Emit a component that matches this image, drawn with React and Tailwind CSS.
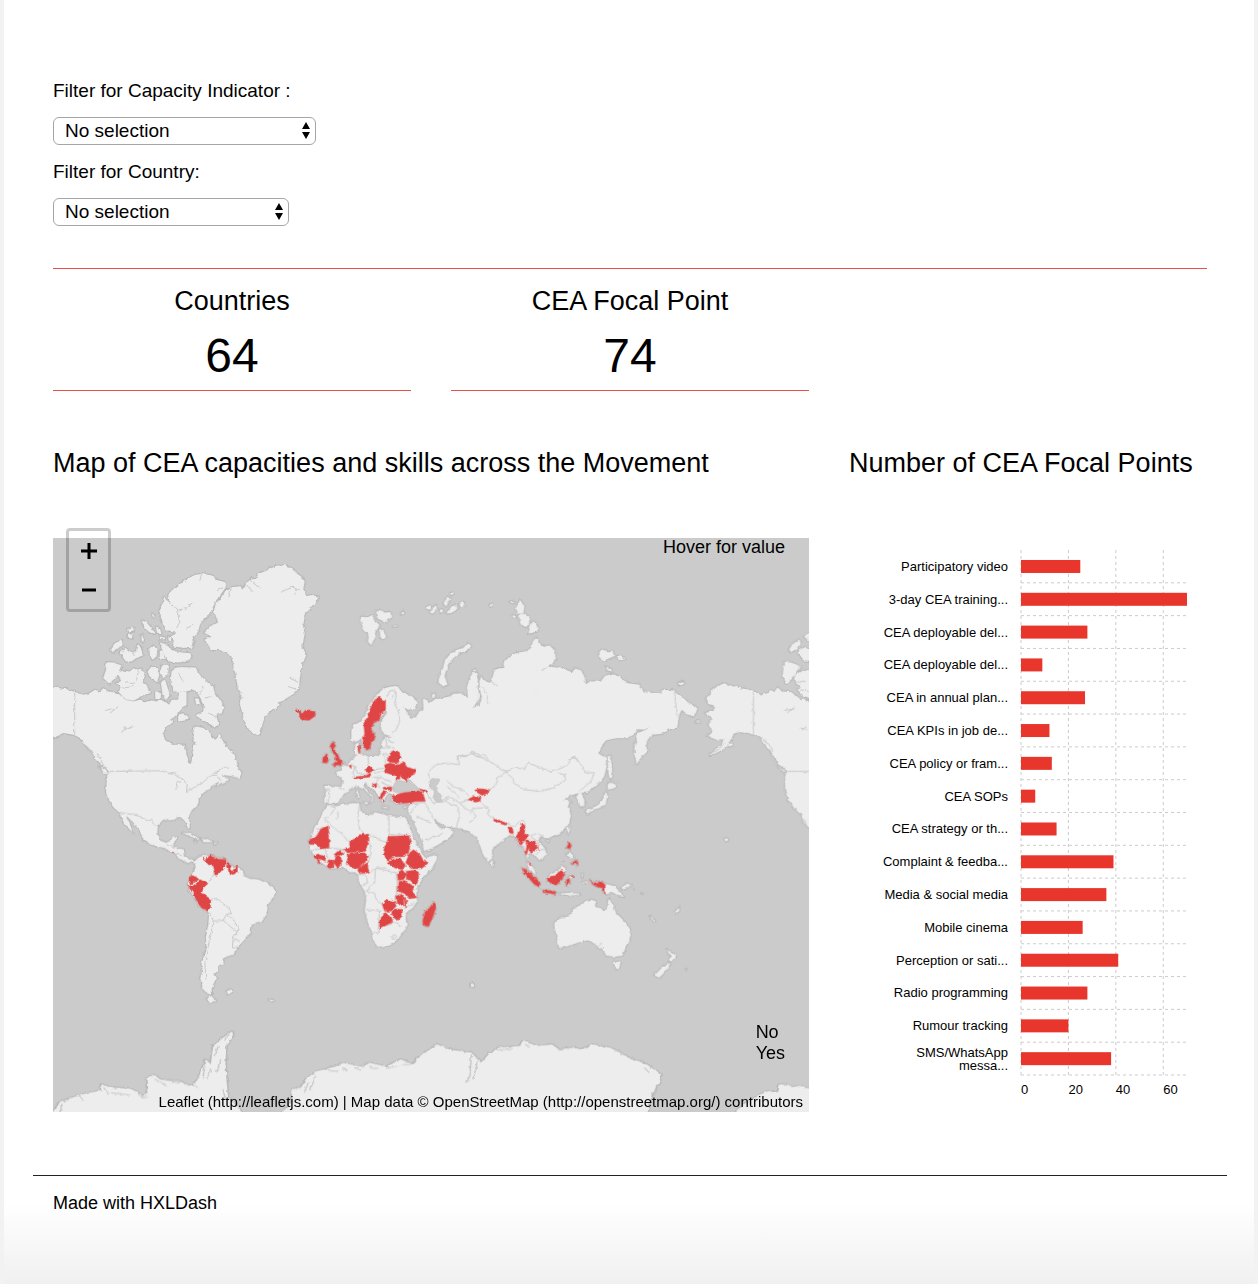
import React from "react";

const SHEETS = [
  {
    at: "translate(50 500) scale(0.33333)",
    land: [
      "M355,285 L375,265 405,240 435,225 460,220 490,228 500,240 522,245 528,262 515,280 500,300 485,330 478,345 465,355 450,375 445,395 430,415 432,430 425,445 395,443 368,440 375,425 365,410 380,395 350,392 340,370 330,350 328,330 338,315 342,293 350,300 362,310Z",
      "M330,428 L355,435 365,450 395,458 422,460 425,470 415,485 385,488 355,485 345,470 338,455Z",
      "M275,362 L290,368 305,385 315,402 300,398 285,385Z M318,380 L330,385 335,402 322,402Z M232,390 L250,383 252,395 235,398Z M232,405 L248,403 246,416 234,414Z",
      "M306,340 L314,345 315,355 308,350Z M275,405 L283,415 280,428 275,420Z M328,410 L345,412 345,418 330,418Z M355,408l10,5 -3,12 -6,-5z",
      "M180,450 L195,430 215,420 218,435 205,445 190,458Z M208,458 L225,443 240,455 258,458 262,435 275,445 278,468 258,475 245,485 228,485Z",
      "M298,445 L312,437 322,450 320,470 308,480 300,465Z M330,452 L340,458 345,478 330,475Z",
      "M170,487 L190,488 215,497 208,515 195,535 178,552 160,535 168,510Z",
      "M200,520 L220,512 240,515 250,505 265,510 275,505 285,530 275,545 290,555 300,580 275,590 250,603 225,598 205,575 215,565 200,548 215,545Z",
      "M293,515 L305,500 322,505 328,525 322,548 310,540 298,528Z M335,495 L358,495 355,515 342,535 332,520Z M333,545 L345,540 352,560 360,585 350,600 338,585Z M315,578l18,0 0,18 -16,4z",
      "M365,515 L380,503 410,502 435,503 450,525 470,545 490,560 495,580 510,600 525,622 515,640 500,645 505,670 500,685 475,672 455,660 440,645 460,635 462,620 455,600 440,575 430,570 405,575 375,575 362,550Z",
      "M385,645 L400,640 418,655 405,662 385,665Z M435,595l12,2 4,15 -12,3z",
      "M-10,562 L30,565 50,568 80,578 100,585 120,580 135,570 150,575 160,565 175,575 195,578 215,590 225,600 250,605 270,600 285,607 305,602 320,605 335,600 345,605 358,615 365,600 385,600 388,575 410,575 410,615 395,628 375,650 360,660 370,665 350,680 340,700 345,720 365,735 385,740 405,755 412,775 416,790 150,790 135,775 125,755 105,735 90,715 70,705 40,700 10,715 -10,720Z",
      "M424,795 L430,765 440,745 432,720 430,700 435,680 455,683 475,690 485,710 497,720 510,705 520,725 535,745 555,770 565,795Z",
      "M462,398 L480,380 505,368 495,340 490,335 500,310 515,290 530,270 545,262 575,258 580,270 590,250 605,235 620,235 625,222 650,212 680,197 705,195 725,205 740,220 762,235 765,250 760,265 770,290 780,285 808,290 795,310 775,330 765,350 760,380 765,400 758,440 770,465 755,500 750,540 748,565 735,580 710,595 690,607 680,625 660,635 645,650 638,675 632,700 625,707 605,697 590,680 580,650 570,610 575,590 565,570 560,540 555,515 550,490 545,470 530,455 510,450 485,450 475,435 465,420 485,410Z",
    ],
    red: ["M738,630 L748,630 757,642 766,632 785,630 798,640 795,650 778,662 760,660 748,650 752,644Z"],
    lines: [
      "M74,578V705 M362,312 L385,330 415,322 430,305 M380,330 L390,365 380,385 M400,238l12,12 M455,222l-5,20 M522,262l-20,10 M410,385l20,-10 M168,632l20,-5 M180,640l25,-20 M215,695l35,-18 M220,685l20,0",
      "M695,275 L730,262 750,270 M740,262l-5,25 M600,240l30,25 M590,255l20,20 M545,262l-8,30 M715,560l30,10 M720,535l25,12 M565,600l18,-5 M565,575l15,8",
      "M225,545l30,5 M215,565l35,-5 M265,512l-5,30 M385,520l15,25 M460,560l-10,25 M485,590l-20,5 M475,640l25,10 M205,440l20,20 M245,450l8,18",
    ],
  },
  {
    at: "translate(300 500) scale(0.33333)",
    land: [
      "M185,350 L205,352 218,345 225,365 240,378 228,395 222,420 215,437 205,425 208,405 195,395 185,370Z M230,335 L240,330 255,338 272,336 275,350 262,367 248,362 232,355Z M240,385 L250,395 260,408 252,420 242,412Z",
      "M303,340l8,-5 4,5 -6,4Z M280,377h13v3h-13Z M378,323 L392,315 396,325 386,330Z M390,335 L410,315 412,325 398,342Z M432,310 L445,290 452,298 440,320Z M440,340 L455,320 470,312 474,328 455,340Z M480,312 L492,305 495,315 484,320Z M452,280l8,-4 2,6 -7,4Z M420,330l8,-3 3,8 -8,4z",
      "M570,315l6,-3 4,5 -7,4z M632,305l10,-3 3,6 -8,2Z M650,325 L662,300 675,320 672,340 655,342Z M655,350 L670,340 688,350 690,370 680,382 665,372Z M640,345l10,5 -3,5 -8,-5z M690,375 L703,364 718,385 712,395 695,400 688,403Z",
      "M508,430 L515,440 500,452 480,460 462,475 448,490 440,510 435,530 445,555 430,560 417,545 422,525 430,505 437,480 450,465 470,450 490,445Z M397,585l8,-4 3,8 -9,3z M518,512l10,-3 2,6z",
      "M155,690 L160,675 185,665 195,650 205,625 220,600 235,580 255,565 275,560 295,560 305,575 325,585 345,595 355,610 345,628 325,630 310,620 325,640 335,658 350,650 360,635 372,625 370,600 382,600 390,610 405,600 425,595 450,590 470,578 490,585 505,592 503,560 510,535 522,515 535,525 535,560 540,590 530,610 520,625 540,615 548,595 540,565 540,545 545,530 560,545 575,550 580,530 585,510 600,505 615,505 612,490 630,470 650,460 675,455 695,445 700,425 712,413 725,435 745,440 765,455 768,475 760,490 745,500 760,505 800,512 800,785 240,785 245,770 240,750 250,742 245,730 258,712 282,710 262,706 248,700 243,680 250,655 262,640 258,630 240,660 222,670 215,690 225,705 225,718 215,725 210,748 200,752 190,735 185,715 170,728 155,720Z",
    ],
    red: [
      "M258,600 L258,630 245,640 240,660 222,670 215,690 225,705 225,718 215,725 212,745 203,752 193,745 190,720 195,700 192,670 205,655 210,630 225,600 240,592 250,600Z",
      "M175,742l5,-8 1,22 -5,3z",
    ],
    lines: [
      "M240,592 L225,590 M262,592 L270,575 285,570 290,590 285,610 298,640 300,665 290,690 278,702 M470,780 L475,768 500,768 515,758 530,770 555,775 565,785 M258,712 L262,740 285,745 M268,712v15h15 M545,560l20,20 M570,545l25,15 M560,585l8,25 M335,640l15,15 M725,515 L745,500 M275,595l10,-10 M245,745h25",
    ],
  },
  {
    at: "translate(550 500) scale(0.33333)",
    land: [
      "M-40,445 L0,437 15,450 18,470 10,490 -5,500 20,503 45,508 70,518 75,505 95,512 105,530 110,552 125,545 155,545 165,530 185,522 210,530 235,550 270,555 285,578 310,578 335,580 340,570 370,572 395,590 420,610 445,625 440,640 430,652 410,640 398,630 390,645 385,680 360,690 340,702 310,705 295,720 290,740 295,755 285,765 270,780 262,795 258,770 255,745 262,720 265,700 290,690 305,680 285,690 265,688 255,700 235,715 200,715 170,722 155,740 145,765 165,775 165,800 -40,800Z",
      "M150,455 L165,450 175,458 190,455 195,468 180,475 165,482 152,475Z M200,468 L215,470 228,478 215,482Z M170,500l12,5 5,10 -10,-2z M385,550 L400,543 407,550 395,557Z",
      "M470,595 L480,590 488,570 510,558 525,550 545,558 575,565 600,570 620,578 640,585 655,580 665,570 675,577 685,563 700,575 725,577 745,590 755,600 800,605 800,800 695,800 675,770 660,750 645,730 630,710 600,700 575,697 555,700 545,720 525,735 505,750 485,762 500,748 520,735 522,718 500,720 475,708 490,695 478,675 490,655 468,640 495,630 498,622 478,615Z",
      "M535,735l12,-5 3,6 -10,5z M440,665h12l3,5z",
      "M705,487 L725,488 752,497 745,515 730,535 715,550 700,535Z M738,525 L760,512 800,512 800,600 765,590 745,570 755,560 740,548Z M718,450 L735,430 752,418 755,430 745,445 725,458Z M745,458 L765,443 800,455 800,488 768,485Z M765,410 L800,385 800,425 775,420Z",
    ],
    red: [],
    lines: [
      "M613,577V705 M376,575L384,650 M706,632l35,-5 M715,640l20,-20 M755,685l20,5 M758,692l15,-12 M630,712l20,30 20,20 M640,712l15,20 M60,778l15,-5 10,8 M740,548l30,-5 M755,570l25,5",
    ],
  },
  {
    at: "translate(50 750) scale(0.33333)",
    land: [
      "M115,-15 L125,5 137,15 148,35 160,50 178,65 172,75 170,100 168,130 180,155 192,175 208,188 215,205 222,220 240,240 252,250 245,235 235,215 228,200 240,205 255,225 270,245 280,270 300,283 330,292 345,295 360,305 375,310 385,325 400,333 415,340 425,335 435,338 432,328 420,330 405,320 402,300 380,295 370,297 368,285 382,265 370,262 360,275 345,280 330,270 322,250 325,225 340,210 365,212 380,203 395,205 405,215 412,232 420,235 418,210 415,195 430,180 445,165 447,145 460,130 475,120 490,105 510,95 500,108 525,100 535,92 525,85 515,75 540,78 570,85 575,70 565,55 555,35 540,10 515,-15 430,-15 428,10 425,38 420,45 415,30 408,5 405,-15Z",
      "M148,50 L165,60 178,75 165,72Z M395,250 L420,250 440,262 450,268 435,266 415,256Z M455,270 L475,268 488,278 462,278Z M432,273l10,3 -4,3z M493,279h8v3h-8z",
      "M435,335 L445,325 462,315 470,320 485,318 500,325 525,328 535,340 550,352 570,355 580,365 585,380 600,388 625,390 650,400 670,412 677,430 665,450 655,465 650,495 637,515 615,520 602,530 598,555 580,575 565,595 550,615 530,622 518,628 522,640 505,650 505,668 490,675 500,685 490,705 485,720 487,735 478,735 465,725 455,715 458,700 450,685 460,670 455,645 462,620 470,590 468,560 475,530 478,490 460,478 445,465 435,445 420,425 413,405 420,385 432,370 438,350 430,340Z",
      "M470,748 L485,740 500,755 480,758Z M530,725l12,-5 5,8 -12,6z M655,750l15,1 -3,5z",
    ],
    red: [
      "M470,330 L480,317 490,322 505,328 528,330 530,345 522,355 505,375 495,377 492,350 475,345 468,335Z M460,322l6,2 -1,10 -4,-2z M532,338 L545,350 540,358 552,370 538,376 535,360 530,352Z M548,360 L563,348 563,370 550,370Z",
      "M418,382 L430,378 445,390 432,398 422,408 417,395Z M413,407 L425,412 440,400 450,390 475,402 460,415 455,428 470,440 483,450 482,475 473,485 455,475 440,455 432,435 420,418Z M368,305h4v4h-4z",
    ],
    lines: [
      "M180,65 L330,63 375,75 400,90 412,105 410,125 440,110 470,90 490,70 505,65 M208,188 L250,195 270,200 290,212 305,212 322,232 M480,490 L490,515 485,545 475,590 465,640 468,690 M490,515 L520,512 530,495 550,510 568,540 560,550 550,565 548,595 565,595 M483,450 L505,450 530,470 545,490 530,495 M490,350 L492,375 478,395 M550,565 L570,575 M578,375 L590,385 M520,510 L540,530 562,548",
      "M378,120 L382,95 395,98 M360,72l20,-5 M480,80l15,-5 20,18 M540,55 L520,55 495,72 M112,-10 L130,15 125,30 M140,10 L160,42 178,70 M350,285l25,10 M380,310l20,10",
    ],
  },
  {
    at: "translate(300 740) scale(0.33333)",
    land: [
      "M270,20 L255,25 245,35 250,42 235,48 215,48 205,50 190,48 182,40 175,25 180,8 168,12 165,30 170,45 155,60 145,75 130,80 125,92 108,98 118,110 130,125 125,142 105,140 75,138 80,150 73,185 90,192 105,193 120,182 125,170 140,158 150,148 165,145 175,138 190,145 205,160 218,175 212,190 222,180 218,168 205,155 195,140 195,130 210,140 225,155 240,170 245,185 258,192 255,175 268,160 282,165 275,180 290,192 320,192 328,190 325,215 340,240 355,280 370,310 372,335 390,330 425,310 455,290 460,275 440,262 425,270 405,245 400,235 420,250 440,260 470,265 500,268 520,275 535,295 560,300 560,20Z",
      "M100,5 L108,18 102,25 115,45 120,58 132,68 125,78 108,80 98,75 110,65 105,50 98,38 95,25 90,20Z M70,55 L80,42 88,58 82,70 68,68Z",
      "M172,152h6v22h-6z M190,188h15l-3,8z M248,202h18v3h-18z M310,203l12,-3 -6,6z",
      "M88,195 L110,200 130,195 165,190 180,190 183,215 205,230 225,218 245,222 265,228 300,232 318,232 325,250 340,290 350,310 365,340 378,355 412,345 412,360 395,390 370,415 355,440 350,460 353,485 340,505 320,520 318,540 325,555 310,580 290,605 270,618 235,622 225,610 218,580 205,550 195,515 200,480 195,455 180,430 175,405 165,398 150,398 135,385 110,385 90,388 70,372 50,355 35,335 28,310 35,290 45,265 60,240 70,215Z",
      "M403,487 L410,500 400,535 385,562 370,555 370,540 378,515 390,505Z",
    ],
    water: [
      "M282,155 L280,138 288,128 300,122 318,128 325,118 340,130 358,148 372,155 350,158 325,155 305,160Z",
      "M388,125 L402,115 420,115 418,128 408,140 418,158 426,170 426,187 412,188 402,175 402,155 390,140Z",
    ],
    red: [
      "M100,5 L108,18 102,25 115,45 120,58 132,68 125,78 108,80 98,75 110,65 105,50 98,38 95,25 90,20Z M70,55 L80,42 88,58 82,70 68,68Z",
      "M30,300 L50,290 65,265 85,260 90,290 88,325 62,328 50,315 30,315Z M42,350 L55,343 75,350 78,365 65,360 52,358Z M54,360l8,4 -2,10 -5,-5z M85,362 L103,358 103,380 90,388 82,378Z M103,345 L118,332 135,340 120,350 105,350Z M108,352 L125,352 125,378 112,384 103,370Z",
      "M150,305 L175,292 188,280 208,285 208,310 195,335 170,338 145,340 130,330 150,325Z M143,345 L170,340 195,340 207,350 195,370 175,387 155,385 143,370Z M178,385 L205,368 205,385 210,400 180,402 174,392Z",
      "M265,290 L328,288 335,310 325,345 310,352 285,352 265,362 250,345 255,320 263,312Z M262,368 L285,357 305,358 318,380 305,390 285,385Z M318,370 L330,340 342,330 362,345 370,360 387,370 365,388 340,388Z",
      "M320,395 L340,392 357,397 357,420 348,438 335,425 320,418Z M293,400 L308,390 320,405 312,420 295,422Z M298,425 L318,422 340,440 343,460 352,475 328,478 315,462 295,455Z M288,470 L305,463 315,475 312,500 290,490Z M316,475l6,10 -2,18 -4,-5z",
      "M248,495 L262,480 285,485 290,500 275,515 255,515Z M275,520 L290,508 308,510 308,530 295,543 283,535Z M240,540 L258,518 275,535 280,548 258,558 240,568Z M403,487 L410,500 400,535 385,562 370,555 370,540 378,515 390,505Z",
      "M262,60 L272,42 285,32 300,38 305,55 295,70 270,68Z M255,75 L270,70 295,75 312,65 322,82 348,90 345,103 328,112 320,125 305,110 290,125 288,108 268,102 255,98Z M195,90 L210,80 225,90 215,97 200,97Z M162,112 L180,110 200,108 205,100 215,102 212,112 165,117Z",
      "M217,135l13,-6 2,12 -6,4z M147,77l9,2 -2,8z M253,142 L278,142 275,152 255,150Z M243,165 L250,155 262,158 255,165 250,172 245,180 240,172Z M248,178l8,5 -4,6z M275,170 L300,162 325,157 350,156 370,160 378,185 350,186 325,190 300,192 283,185Z M357,147 L380,152 383,158 370,158Z",
    ],
    lines: [
      "M92,200 L110,205 75,240 M50,268h20 M115,215v20l-5,5 M75,240 L150,305 M180,190 L175,225 180,268 190,280 M268,230 L268,285 M268,285H325 M190,280 L208,285 240,300 265,312 M210,310 L215,340 205,370 M90,325 L130,330 M228,385 L225,430 200,455 M210,400 L228,385 262,385 M228,385 L290,400 295,455 285,480 M200,455 L225,460 230,480 248,495 M200,510 L245,515 M240,515 L235,580 215,580 M258,560 L285,550 305,560 M315,505 L345,490 M175,405h20l10,25 -15,5 M30,335 L70,325 M275,595l8,-10 8,5 -6,10z M75,328l10,30",
      "M150,75 L165,80 160,100 170,115 M155,60 L165,55 M205,50 L208,80 M208,80 L225,90 255,85 M165,80l8,20 30,5 M250,42 L258,70 M78,150h12l-5,38 M118,145 L135,150 M225,100 L255,95 M218,115 L240,110 255,120 275,125 M240,110 L230,125 M232,130 L245,145 M245,130 L275,140 M335,190 L355,190 375,188 M340,240 L330,225 355,190 M350,230 L395,250 M375,188 L390,215 400,235 M375,300 L415,290 430,280 M383,158 L400,190 435,185 475,200 480,230 470,265 M425,185 L450,170 480,190 510,180 M480,190 L510,215 525,205 M435,185l15,-10 M385,98 L390,115 M390,95 L410,75 440,70 480,75 475,50 500,50 520,38 540,45 M445,125 L460,140 490,150 510,170 M440,140 L455,150 480,175 M510,250 L530,230 520,215",
      "M250,42h20l10,-10 M232,5l15,5 M170,45l-8,10",
    ],
  },
  {
    at: "translate(470 740) scale(0.33333)",
    land: [
      "M-20,20 L400,15 385,40 410,55 412,80 405,110 390,130 370,145 352,160 335,158 345,180 345,200 332,200 328,185 320,172 330,160 310,165 290,175 285,182 305,185 295,200 305,225 300,250 285,270 270,285 250,290 235,297 220,290 205,300 225,325 232,345 210,362 195,345 178,345 172,365 185,375 200,400 188,400 175,380 170,345 165,320 150,318 140,290 125,285 110,292 85,315 68,330 68,355 55,368 40,340 28,310 25,292 15,290 0,275 -20,270Z",
      "M65,360l8,8 -2,12 -6,-5z M230,305l8,-2 -2,6z M295,262l6,2 -3,20 -6,-8z M415,50 L425,48 428,90 430,115 420,115 416,85Z M415,135 L425,125 440,140 428,148 415,150Z M410,155 L415,170 408,195 390,205 370,210 355,222 348,215 365,205 385,198 400,180Z",
      "M233,415 L243,405 265,395 275,378 288,385 285,400 278,420 262,436 245,430 235,425Z M155,385 L170,390 190,410 213,432 210,443 195,435 175,412Z M217,452 L240,453 262,460 255,464 220,458Z M287,430 L295,415 312,408 300,418 303,432 295,428 294,440Z",
      "M362,420 L372,430 395,425 408,432 435,440 450,455 465,472 450,470 430,458 410,465 395,445 370,435Z M455,445 L475,432 485,438 465,450Z M272,462 L300,460 332,463 326,467 280,468Z M337,405l4,0 -2,10z M340,424l18,3 -10,4z M490,448l6,3 M515,460l8,5",
      "M292,325 L298,310 306,315 302,328Z M305,372 L320,362 327,370 325,380 318,372 310,375Z M290,345l12,-8 6,8 8,12 -12,-2z",
      "M255,550 L270,535 300,530 315,505 330,500 345,487 365,480 382,487 380,500 400,512 412,510 418,478 430,495 440,520 465,545 480,565 485,590 470,620 460,648 435,652 410,648 400,625 390,628 385,620 360,602 330,608 295,620 270,625 262,610 265,590 255,565Z M433,667 L455,668 450,685 440,690Z",
      "M592,628 L605,640 622,648 612,665 600,665 605,652Z M597,670 L600,680 580,705 570,714 555,708 575,688Z M540,528l18,14 -5,3z M618,515l12,-10 0,10 -10,5z M765,298l10,-2 2,7 -8,2z M649,689l3,0 0,3z M4,735l6,-1 -1,6z",
      "M875,-30 L885,10 900,30 915,50 935,72 955,95 948,110 948,150 955,175 975,205 995,225 1005,250 1018,262 1040,262 1040,-30Z M925,78l25,15 -5,5z",
      "M720,45 L745,32 765,15 780,0 785,5 760,30 730,45Z",
    ],
    red: [
      "M15,152 L30,147 62,150 55,160 40,168 25,160Z M-5,180 L12,170 35,172 32,185 18,188 5,183Z M75,237 L110,250 108,257 80,248 72,243Z M115,262 L130,268 133,283 122,280Z M140,290 L150,275 158,252 168,262 165,280 180,290 168,300 155,318 148,305Z",
      "M168,302 L185,303 205,315 207,330 190,335 185,343 178,325 172,345 168,345 172,320Z M175,368l12,8 -4,3z M233,415 L255,408 275,392 285,400 278,420 262,436 245,430 235,425Z M155,385 L170,390 190,410 213,432 210,443 195,435 175,412Z M217,452 L240,453 262,460 255,464 220,458Z",
      "M287,430 L295,415 300,418 303,432 295,428 294,440Z M303,410l10,-2 -2,4z M362,420 L372,430 395,425 408,435 408,465 395,445 370,435Z M292,325 L298,310 306,315 302,328Z M305,372 L320,362 327,370 325,380 318,372 310,375Z M280,365l4,-4 0,4z",
    ],
    lines: [
      "M0,38 L25,50 45,45 60,65 85,80 108,97 M108,97 L135,85 165,88 175,70 205,80 240,95 270,88 295,75 305,55 320,55 335,75 345,95 375,100 365,125 330,155 M108,97 L130,115 135,130 165,150 210,155 250,145 290,120 285,105 265,100 M108,97 L85,115 75,140 60,150 M35,187 L55,205 60,230 75,238 M110,250 L130,262 160,240 168,255 M180,290 L205,280 220,290 M180,290 L205,305 210,320 M207,330 L225,330 M300,170 L320,172 M0,225 L20,205 55,205 M0,250l20,-20 M955,95H1030 M390,620l5,-10 M430,130l28,-8",
      "M870,0 L890,15 880,20 M890,0 L910,30 905,55 920,75 950,95 M990,220l20,30 M175,345l10,30 M200,345l10,-10",
    ],
  },
  {
    at: "translate(50 980) scale(0.4878 0.33333)",
    land: [
      "M0,410 L20,370 45,355 80,340 105,335 105,315 125,325 165,328 190,350 200,345 198,295 215,287 225,300 245,305 265,305 285,320 300,310 312,270 320,240 330,255 335,200 355,175 375,155 375,175 362,195 360,250 362,300 365,350 400,410Z",
      "M470,410 L495,370 498,330 515,325 525,300 550,275 590,260 600,250 640,262 655,250 690,262 720,240 745,255 755,235 795,195 820,210 865,220 885,250 900,225 920,205 965,200 970,185 1000,200 1030,195 1045,210 1075,205 1090,210 1115,195 1150,205 1190,235 1225,255 1255,285 1250,310 1235,345 1225,410Z",
      "M1400,410 L1425,375 1465,340 1495,335 1498,315 1570,330 1570,410Z M864,13l4,-1 1,7 -5,1z",
    ],
    red: [],
    lines: [
      "M20,400l5,-25 M60,350l8,15 M110,325l10,20 M125,340l40,8 M180,350l20,5 M215,300l25,20 M250,310l20,-3 M290,315l15,10 M318,260l-5,40 M330,270l-8,30 M345,200l-6,30 M350,240l-8,40 M358,180l10,-15 M355,330l5,30",
      "M545,290l-10,40 M530,310l-8,30 M570,272l20,5 M600,265l10,10 M625,265l15,8 M655,262l20,5 M690,268l25,-10 M720,255l20,0 M865,225 L862,290 855,310 M878,245 L868,300 M920,212l30,-5 M975,195l10,8 M1040,212l15,0 M1220,265l10,15",
    ],
  },
];

function WorldMap() {
  return (
    <svg viewBox="53 538 757 575" className="block h-auto w-full" role="img" aria-label="World map of CEA capacities">
      <defs>
        <filter id="coast" x="0" y="0" width="100%" height="100%">
          <feTurbulence type="fractalNoise" baseFrequency="0.22" numOctaves="2" seed="4" />
          <feDisplacementMap in="SourceGraphic" scale="3.5" xChannelSelector="R" yChannelSelector="G" />
        </filter>
      </defs>
      <rect x="53" y="538" width="757" height="575" fill="#cbcbcb" />
      <g filter="url(#coast)">
        {SHEETS.map((s) => (
          <path key={s.at} transform={s.at} d={s.land.join(" ")} fill="none" stroke="#b9b9b9" strokeWidth="7" strokeLinejoin="round" />
        ))}
        {SHEETS.map((s) => (
          <g key={s.at} transform={s.at} fill="#ededed">
            {s.land.map((d) => (
              <path key={d} d={d} />
            ))}
          </g>
        ))}
        {SHEETS.map((s) => (
          <g key={s.at} transform={s.at}>
            {(s.water || []).map((d) => (
              <path key={d} d={d} fill="#cbcbcb" stroke="#c0c0c0" strokeWidth="3" />
            ))}
            <path d={s.lines.join(" ")} fill="none" stroke="#c8c8c8" strokeWidth="3" />
          </g>
        ))}
        {SHEETS.map((s) => (
          <path key={s.at} transform={s.at} d={s.red.join(" ")} fill="#e04545" stroke="#e04545" strokeWidth="1" />
        ))}
      </g>
    </svg>
  );
}

const BARS = [
  ["Participatory video", 25],
  ["3-day CEA training...", 70],
  ["CEA deployable del...", 28],
  ["CEA deployable del...", 9],
  ["CEA in annual plan...", 27],
  ["CEA KPIs in job de...", 12],
  ["CEA policy or fram...", 13],
  ["CEA SOPs", 6],
  ["CEA strategy or th...", 15],
  ["Complaint & feedba...", 39],
  ["Media & social media", 36],
  ["Mobile cinema", 26],
  ["Perception or sati...", 41],
  ["Radio programming", 28],
  ["Rumour tracking", 20],
  ["SMS/WhatsApp messa...", 38],
];

const pct = (n) => `${n}%`;

function FocalPointChart() {
  return (
    <div className="grid grid-cols-[159px_1fr] gap-x-[13px] pr-5 text-[13px] leading-[13px]">
      <ul className="grid h-[525px] auto-rows-fr">
        {BARS.map(([label], i) => (
          <li key={i} className="flex items-center justify-end text-right">
            <span className={i === 15 ? "w-[110px]" : ""}>{label}</span>
          </li>
        ))}
      </ul>
      <svg className="h-[525px] w-full overflow-visible" role="img" aria-label="Focal points per capacity">
        {[0, 20, 40, 60].map((v) => (
          <line key={v} x1={pct(v / 0.7)} x2={pct(v / 0.7)} y1="0" y2="100%" stroke="#cccccc" strokeDasharray="3 3" />
        ))}
        {BARS.map((_, i) => (
          <line key={i} x1="0" x2="100%" y1={pct((i + 1) * 6.25)} y2={pct((i + 1) * 6.25)} stroke="#cccccc" strokeDasharray="3 3" />
        ))}
        {BARS.map(([, v], i) => (
          <rect key={i} x="0" y={pct(i * 6.25 + 1.9)} width={pct(v / 0.7)} height="13" fill="#e8362c" />
        ))}
      </svg>
      <div className="col-start-2 flex pt-2">
        {[0, 20, 40, 60].map((v) => (
          <span key={v} className="w-[28.57%] shrink-0 last:w-auto">
            {v}
          </span>
        ))}
      </div>
    </div>
  );
}

function Filter({ id, label, width }) {
  return (
    <div className="text-[19px]">
      <label htmlFor={id} className="block leading-[26px]">
        {label}
      </label>
      <div className={`relative mt-[13px] ${width}`}>
        <select id={id} className="block h-7 w-full appearance-none rounded-[6px] border border-[#a6a6a6] bg-white pr-6 pl-[11px] leading-6 text-black">
          <option>No selection</option>
        </select>
        <svg viewBox="0 0 8 17" className="pointer-events-none absolute top-[5px] right-[6px] h-[17px] w-2" aria-hidden="true">
          <path d="M4 0 8 7H0ZM0 10H8L4 17Z" />
        </svg>
      </div>
    </div>
  );
}

function Stat({ label, value }) {
  return (
    <div className="px-5 pt-4 text-center">
      <h2 className="text-[27px] leading-8">{label}</h2>
      <p className="mt-[14px] mb-[9px] text-[48px] leading-[50px]">{value}</p>
      <div className="h-px bg-[#e8504a]" />
    </div>
  );
}

export default function App() {
  return (
    <div
      className="min-h-screen border-x-4 border-[#f2f2f2] bg-white bg-[linear-gradient(to_top,#f0f0f0,#ffffff_80px)] pr-[27px] pl-[29px] text-[18px] text-black"
      style={{ fontFamily: '"Liberation Sans", Arial, sans-serif' }}
    >
      <form className="flex flex-col gap-[14px] px-5 pt-[78px]">
        <Filter id="indicator" label="Filter for Capacity Indicator :" width="w-[263px]" />
        <Filter id="country" label="Filter for Country:" width="w-[236px]" />
      </form>

      <div className="mx-5 mt-[42px] h-px bg-[#e8504a]" />
      <section className="grid grid-cols-3">
        <Stat label="Countries" value="64" />
        <Stat label="CEA Focal Point" value="74" />
      </section>

      <main className="mt-14 grid grid-cols-3">
        <section className="col-span-2 px-5">
          <h2 className="text-[27px] leading-8">Map of CEA capacities and skills across the Movement</h2>
          <div className="relative mt-[59px]">
            <WorldMap />
            <div className="absolute -top-[10px] left-[13px] flex w-[45px] flex-col rounded-[4px] border-[3px] border-black/20">
              <button type="button" aria-label="Zoom in" className="flex h-[39px] items-center justify-center">
                <svg viewBox="0 0 16 16" className="h-4 w-4" aria-hidden="true">
                  <path d="M0 8H16M8 0V16" stroke="#000" strokeWidth="3" />
                </svg>
              </button>
              <button type="button" aria-label="Zoom out" className="flex h-[39px] items-center justify-center">
                <svg viewBox="0 0 16 16" className="h-4 w-4" aria-hidden="true">
                  <path d="M1 8H15" stroke="#000" strokeWidth="3" />
                </svg>
              </button>
            </div>
            <p className="absolute top-0 right-6 leading-[18px]">Hover for value</p>
            <p className="absolute right-6 bottom-12 leading-[21px]">
              No
              <br />
              Yes
            </p>
            <p className="absolute right-[6px] bottom-0 text-[15px] leading-5 whitespace-nowrap">
              Leaflet (http://leafletjs.com) | Map data © OpenStreetMap (http://openstreetmap.org/) contributors
            </p>
          </div>
        </section>
        <section className="px-5">
          <h2 className="mb-[71px] text-[27px] leading-8 whitespace-nowrap">Number of CEA Focal Points</h2>
          <FocalPointChart />
        </section>
      </main>

      <footer className="mt-[63px] border-t border-[#222222] px-5 pt-[14px] leading-[26px]">Made with HXLDash</footer>
    </div>
  );
}
